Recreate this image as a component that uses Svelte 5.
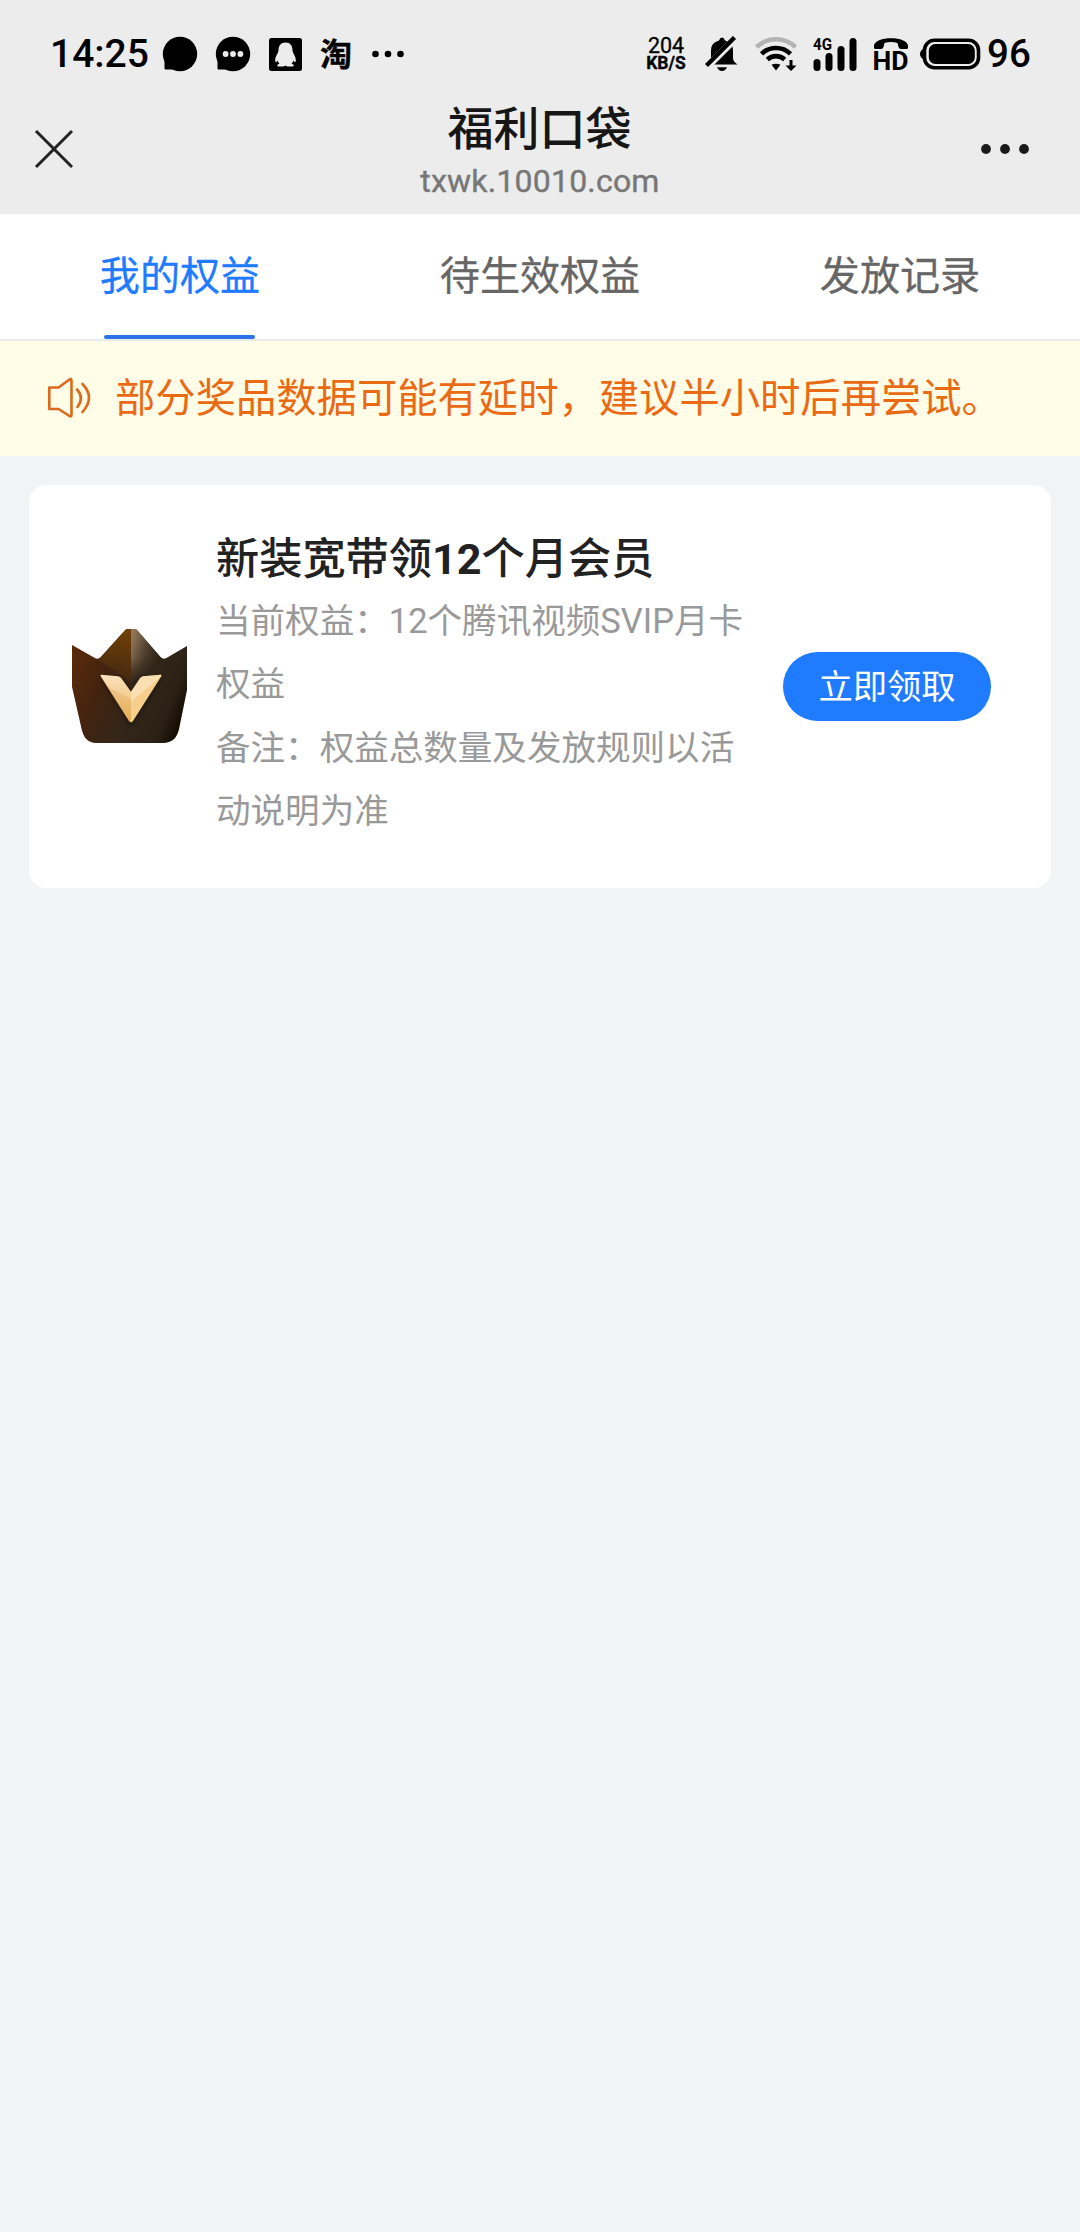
<script>
  const tabs = ['我的权益', '待生效权益', '发放记录'];
  let active = $state(0);
</script>

<div class="screen">
  <header>
    <div class="status">
      <div class="group left">
        <span class="time">14:25</span>
        <svg class="bubble" width="36" height="36" viewBox="0 0 36 36">
          <circle cx="18" cy="18" r="17.2" />
          <path d="M2.5 22V32.5Q2.5 33.5 3.5 33.5H14Z" />
        </svg>
        <svg class="chat" width="36" height="36" viewBox="0 0 36 36">
          <circle cx="18" cy="18" r="17.2" />
          <path d="M2.5 22V32.5Q2.5 33.5 3.5 33.5H14Z" />
          <g fill="#ececec"><circle cx="10.6" cy="18" r="2.9" /><circle cx="18" cy="18" r="2.9" /><circle cx="25.4" cy="18" r="2.9" /></g>
        </svg>
        <svg class="penguin" width="33" height="33" viewBox="0 0 33 33">
          <rect width="33" height="33" rx="2.5" />
          <path fill="#ececec" d="M16.5 4.5C11.8 4.5 9.5 7.8 9.5 12.2C9.5 15 6.2 18 6.2 22C6.2 24.5 7 24.8 8.8 22.5C9 24 9.7 25 10.5 25.7C8 26.2 7.3 28.5 10 28.5H14C15.8 28.5 15.5 27.8 16.5 27.8C17.5 27.8 17.2 28.5 19 28.5H23C25.7 28.5 25 26.2 22.5 25.7C23.3 25 24 24 24.2 22.5C26 24.8 26.8 24.5 26.8 22C26.8 18 23.5 15 23.5 12.2C23.5 7.8 21.2 4.5 16.5 4.5Z" />
        </svg>
        <span class="tao">淘</span>
        <svg class="more-dots" width="34" height="10" viewBox="0 0 34 10">
          <circle cx="4.5" cy="5" r="3.3" /><circle cx="17" cy="5" r="3.3" /><circle cx="29.5" cy="5" r="3.3" />
        </svg>
      </div>
      <div class="group right">
        <div class="speed"><span>204</span><b>KB/S</b></div>
        <svg class="bell" width="34" height="36" viewBox="0 0 34 36">
          <path d="M3.5 28.5Q6 27 6 23V14.5Q6 6.5 14 4.5Q15 1.5 17 1.5T20 4.5Q28 6.5 28 14.5V22Q28 25.5 32.5 28.5Z" />
          <path d="M12 31.3H22Q20.5 35 17 35T12 31.3Z" />
          <path d="M-1 30L28 1" stroke="#ececec" stroke-width="7" transform="translate(2 2)" />
          <path d="M1.500 29.500L29.500 1.500" stroke="#000" stroke-width="4.400" />
        </svg>
        <svg class="wifi" width="44" height="36" viewBox="0 0 44 36">
          <g fill="none" stroke="#000" stroke-width="4.6">
            <path d="M2.5 11.2A28 28 0 0 1 41.5 11.2" stroke="#b3b3b3" />
            <path d="M7.5 17.8A21 21 0 0 1 36.5 17.8" />
            <path d="M13.3 23.5A13 13 0 0 1 30.7 23.5" />
          </g>
          <path d="M17.5 28.8Q22 26.5 26.5 28.8L22 34.5Z" />
          <path d="M35.5 24H38.5V29.5H42.5L37 35L31.5 29.5H35.5Z" />
        </svg>
        <svg class="signal" width="46" height="46" viewBox="0 -5 46 46">
          <text x="0" y="14" font-size="17" font-weight="700" textLength="19" lengthAdjust="spacingAndGlyphs">4G</text>
          <rect x="0.5" y="23" width="7" height="12" rx="3.5" />
          <rect x="12.5" y="17" width="7" height="18" rx="3.5" />
          <rect x="24.5" y="10" width="7" height="25" rx="3.5" />
          <rect x="36.5" y="2" width="7" height="33" rx="3.5" />
        </svg>
        <svg class="hd" width="36" height="46" viewBox="0 -5 36 46">
          <path d="M1 10C1 -0.500 35 -0.500 35 10V11.500Q35 13 33.500 13H28Q26 13 25.500 11L24.500 7Q18 5 11.500 7L10.500 11Q10 13 8 13H2.500Q1 13 1 11.500Z" />
          <text x="-0.500" y="33.500" font-size="25" font-weight="700" textLength="36" lengthAdjust="spacingAndGlyphs">HD</text>
        </svg>
        <svg class="battery" width="61" height="32" viewBox="0 0 61 32">
          <rect x="4.500" y="2.300" width="54" height="27.400" rx="10" fill="none" stroke="#000" stroke-width="3.600" />
          <rect x="8.800" y="6" width="46" height="20" rx="6.500" />
          <path d="M4 10.500V21.500Q0 19.500 0 16T4 10.500Z" />
        </svg>
        <span class="percent">96</span>
      </div>
    </div>
    <div class="nav">
      <svg class="close" width="40" height="40" viewBox="0 0 40 40">
        <path d="M2 2L38 38M38 2L2 38" stroke="#222" stroke-width="3" />
      </svg>
      <div class="heading">
        <h1>福利口袋</h1>
        <p>txwk.10010.com</p>
      </div>
      <svg class="menu" width="50" height="12" viewBox="0 0 50 12">
        <circle cx="6" cy="6" r="4.900" /><circle cx="25" cy="6" r="4.900" /><circle cx="44" cy="6" r="4.900" />
      </svg>
    </div>
  </header>

  <nav class="tabs">
    {#each tabs as tab, i}
      <button class="tab" class:active={i === active} onclick={() => (active = i)}>
        <span class="label">{tab}</span>
        <span class="bar"></span>
      </button>
    {/each}
  </nav>

  <div class="notice">
    <svg width="44" height="42" viewBox="0 0 44 42" fill="none" stroke="#dc6a1c" stroke-width="2.600" stroke-linejoin="round" stroke-linecap="round">
      <path d="M2.300 10.500H11.500L22.500 2.500Q24.500 1.500 24.500 3.500V38Q24.500 40 22.500 39L11.500 32H2.300Z" />
      <path d="M30 12.500Q37.500 20.500 30.500 30M35.500 7Q48.500 20.500 35.500 35" />
    </svg>
    <span>部分奖品数据可能有延时，建议半小时后再尝试。</span>
  </div>

  <main>
    <article class="card">
      <svg class="crown" width="115" height="114" viewBox="36 57 345 342" preserveAspectRatio="none">
        <defs>
          <linearGradient id="body" x1="0" y1="0.300" x2="1" y2="0.700">
            <stop offset="0" stop-color="#58290b" />
            <stop offset="0.300" stop-color="#412310" />
            <stop offset="0.600" stop-color="#32261a" />
            <stop offset="0.850" stop-color="#2c2115" />
            <stop offset="1" stop-color="#150d02" />
          </linearGradient>
          <linearGradient id="peakLeft" x1="0.600" y1="0" x2="0.500" y2="1">
            <stop offset="0" stop-color="#704007" />
            <stop offset="1" stop-color="#432711" />
          </linearGradient>
          <linearGradient id="peakRight" x1="0" y1="0.200" x2="0.800" y2="0.700">
            <stop offset="0" stop-color="#907657" />
            <stop offset="0.550" stop-color="#4b3b2a" />
            <stop offset="1" stop-color="#2c2115" />
          </linearGradient>
          <linearGradient id="fade" x1="0" y1="0" x2="0" y2="1">
            <stop offset="0.500" stop-color="#2d2116" stop-opacity="0" />
            <stop offset="1" stop-color="#2d2116" />
          </linearGradient>
          <linearGradient id="gold" x1="0" y1="0" x2="0" y2="1">
            <stop offset="0" stop-color="#fbe2be" />
            <stop offset="1" stop-color="#e9b25c" />
          </linearGradient>
          <filter id="soft"><feGaussianBlur stdDeviation="7" /></filter>
        </defs>
        <path fill="url(#body)" d="M36 105L106 145Q115 149 122 142L196 60Q199 57 203 57H224Q228 57 231 60L302 142Q309 149 318 145L381 108V240L357 358Q348 399 309 399H108Q74 399 65 358L36 230Z" />
        <path fill="url(#peakLeft)" d="M122 142L196 60Q199 57 203 57H213V215L117 150Z" />
        <path fill="url(#peakRight)" d="M213 57H224Q228 57 231 60L302 142L308 147L213 230Z" />
        <path fill="url(#fade)" d="M213 57H224Q228 57 231 60L302 142L308 147L213 230Z" />
        <path fill="#100a04" opacity="0.450" filter="url(#soft)" d="M122 205H185L213 250L242 205H305L214 352Z" />
        <path fill="url(#gold)" d="M124 194L174 199Q181 200 184 205L213 245V337Q210 337 207 333L122 199Q120 194 124 194Z" />
        <path fill="#f6cf8c" d="M302 194L250 199Q243 200 240 205L213 245V337Q216 337 219 333L304 199Q306 194 302 194Z" />
        <path fill="#fde9cd" opacity="0.600" d="M302 194L250 199Q243 200 240 205L213 245V275L304 199Z" />
        <path fill="#d99d45" opacity="0.250" d="M140 228L213 268V337Q210 337 207 333Z" />
      </svg>
      <div class="info">
        <h2>新装宽带领<b>12</b>个月会员</h2>
        <p>当前权益：12个腾讯视频SVIP月卡<br />权益</p>
        <p>备注：权益总数量及发放规则以活<br />动说明为准</p>
      </div>
      <button class="claim">立即领取</button>
    </article>
  </main>
</div>

<style>
  :global(body) {
    background: #f2f3f5;
  }
  .screen {
    min-height: 2232px;
    background: #f2f3f5;
    font-family: Roboto, 'Noto Sans CJK SC', sans-serif;
  }
  h1, h2, p {
    margin: 0;
  }
  svg {
    display: block;
    flex: none;
  }
  button {
    border: 0;
    padding: 0;
    background: none;
    font-family: inherit;
  }
  header {
    height: 214px;
    background: #ececec;
  }
  .status {
    height: 108px;
    display: flex;
    justify-content: space-between;
    color: #000;
  }
  .group {
    display: flex;
    align-items: center;
  }
  .left {
    padding-left: 50px;
  }
  .right {
    padding-right: 50px;
  }
  .time {
    width: 112px;
    font-size: 39px;
    font-weight: 500;
    line-height: 46px;
  }
  .chat {
    margin-left: 17px;
  }
  .penguin {
    margin-left: 18px;
  }
  .tao {
    width: 34px;
    margin-left: 18px;
    padding-bottom: 4px;
    font-family: 'Noto Sans CJK SC', sans-serif;
    font-size: 32px;
    font-weight: 700;
    line-height: 40px;
    -webkit-text-stroke: 0.400px #000;
  }
  .more-dots {
    margin-left: 17px;
  }
  .speed {
    width: 44px;
    display: flex;
    flex-direction: column;
    align-items: center;
    font-size: 21.500px;
    line-height: 18px;
    white-space: nowrap;
    -webkit-text-stroke: 0.300px #000;
  }
  .speed b {
    font-size: 17.500px;
    line-height: 16px;
  }
  .bell {
    margin-left: 17px;
  }
  .wifi {
    margin-left: 15px;
  }
  .signal {
    margin-left: 15px;
  }
  .hd {
    margin-left: 14px;
  }
  .battery {
    margin-left: 11px;
  }
  .percent {
    width: 43px;
    margin-left: 6px;
    font-size: 38.500px;
    font-weight: 500;
    line-height: 46px;
  }
  .nav {
    height: 106px;
    display: grid;
    grid-template-columns: 120px 1fr 120px;
    align-items: start;
  }
  .close {
    margin: 21px 0 0 34px;
  }
  .menu {
    margin: 35px 0 0 20px;
    fill: #1a1a1a;
  }
  .heading {
    text-align: center;
  }
  h1 {
    margin-top: -11px;
    padding-right: 1px;
    color: #161616;
    font-size: 46px;
    font-weight: 500;
    line-height: 64px;
  }
  .heading p {
    margin-top: 1px;
    color: #777;
    font-size: 32px;
    line-height: 38px;
    letter-spacing: 0.200px;
    -webkit-text-stroke: 0.400px #777;
  }
  .tabs {
    height: 125px;
    display: grid;
    grid-template-columns: repeat(3, 1fr);
    background: #fff;
    border-bottom: 2px solid #e8e9e8;
  }
  .tab {
    display: flex;
    flex-direction: column;
    align-items: center;
    justify-content: space-between;
    color: #666;
    font-size: 40.100px;
    -webkit-text-stroke: 0.300px currentColor;
  }
  .label {
    padding-top: 33px;
    line-height: 60px;
  }
  .bar {
    width: 151px;
    height: 4px;
    margin-right: 1px;
    border-radius: 2px;
  }
  .active {
    color: #1f7bff;
  }
  .active .bar {
    background: #2b73e6;
  }
  .notice {
    height: 115px;
    display: flex;
    align-items: center;
    gap: 24px;
    padding-left: 47px;
    background: #fffce8;
    color: #ea6a14;
    font-size: 40.320px;
    white-space: nowrap;
  }
  .notice svg {
    margin-bottom: 2px;
  }
  .notice span {
    padding-bottom: 9px;
  }
  main {
    padding: 29px 29px 0;
  }
  .card {
    height: 403px;
    display: flex;
    align-items: center;
    border-radius: 17px;
    background: #fff;
  }
  .crown {
    margin: 0 0 2px 43px;
  }
  .info {
    width: 538px;
    margin-left: 29px;
    padding-bottom: 2px;
    white-space: nowrap;
  }
  h2 {
    margin-bottom: -1px;
    color: #222;
    font-size: 43.200px;
    font-weight: 500;
    line-height: 63px;
  }
  .info p {
    color: #999;
    font-size: 34.560px;
    line-height: 63.200px;
  }
  .claim {
    width: 208px;
    height: 69px;
    margin-left: 29px;
    padding-top: 2px;
    border-radius: 35px;
    background: #1f7bff;
    color: #fff;
    font-size: 34.300px;
    line-height: 67px;
  }
</style>
